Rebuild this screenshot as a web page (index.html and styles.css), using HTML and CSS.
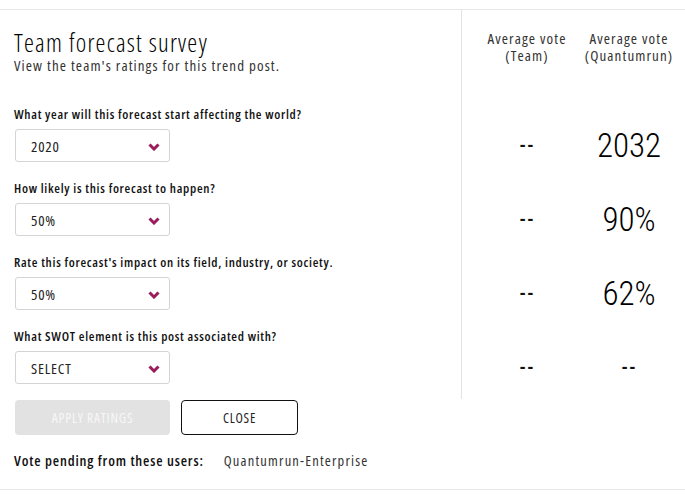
FILE: index.html
```html
<!DOCTYPE html>
<html>
<head>
<meta charset="utf-8">
<link rel="stylesheet" href="styles.css">
</head>
<body>
<div class="survey">
  <div class="top">
    <div class="form">
      <h1 class="title">Team forecast survey</h1>
      <p class="subtitle">View the team's ratings for this trend post.</p>
      <div class="question">
        <div class="label">What year will this forecast start affecting the world?</div>
        <div class="select"><span>2020</span><svg class="chev" viewBox="0 0 12 8"><path d="M1.5 1.5 L6 6 L10.5 1.5" /></svg></div>
      </div>
      <div class="question">
        <div class="label">How likely is this forecast to happen?</div>
        <div class="select"><span>50%</span><svg class="chev" viewBox="0 0 12 8"><path d="M1.5 1.5 L6 6 L10.5 1.5" /></svg></div>
      </div>
      <div class="question">
        <div class="label">Rate this forecast's impact on its field, industry, or society.</div>
        <div class="select"><span>50%</span><svg class="chev" viewBox="0 0 12 8"><path d="M1.5 1.5 L6 6 L10.5 1.5" /></svg></div>
      </div>
      <div class="question">
        <div class="label">What SWOT element is this post associated with?</div>
        <div class="select"><span>SELECT</span><svg class="chev" viewBox="0 0 12 8"><path d="M1.5 1.5 L6 6 L10.5 1.5" /></svg></div>
      </div>
    </div>
    <div class="stats">
      <div class="row head">
        <div class="col">Average vote<br>(Team)</div>
        <div class="col">Average vote<br>(Quantumrun)</div>
      </div>
      <div class="row val"><div class="col dash">--</div><div class="col big">2032</div></div>
      <div class="row val"><div class="col dash">--</div><div class="col big">90%</div></div>
      <div class="row val"><div class="col dash">--</div><div class="col big">62%</div></div>
      <div class="row val"><div class="col dash">--</div><div class="col dash">--</div></div>
    </div>
  </div>
  <div class="actions">
    <button class="btn apply">APPLY RATINGS</button>
    <button class="btn close">CLOSE</button>
  </div>
  <div class="pending">
    <span class="pending-label">Vote pending from these users:</span>
    <span class="pending-user">Quantumrun-Enterprise</span>
  </div>
</div>
</body>
</html>
```
FILE: styles.css
```css
html, body {
  margin: 0;
  padding: 0;
  background: #fff;
}
body {
  padding-top: 9px;
  font-family: "Open Sans", sans-serif;
  font-stretch: 87.5%;
  font-weight: 400;
  color: #222;
}
.survey {
  border-top: 1px solid #e6e6e6;
  border-bottom: 1px solid #e6e6e6;
  width: 685px;
}
.top {
  display: flex;
  height: 389px;
}
.form {
  width: 447px;
  padding-left: 14px;
  border-right: 1px solid #e3e3e3;
}
.title {
  margin: 0;
  padding-top: 18px;
  font-size: 25px;
  line-height: 28px;
  font-weight: 300;
  letter-spacing: 1.2px;
  color: #000;
}
.subtitle {
  margin: 0 0 32px;
  font-size: 15px;
  line-height: 18px;
  font-weight: 400;
  letter-spacing: 1.1px;
  color: #333;
}
.label {
  font-size: 13px;
  font-weight: 600;
  line-height: 16px;
  letter-spacing: 0.7px;
  color: #111;
  margin-bottom: 7px;
}
.select {
  box-sizing: border-box;
  width: 155px;
  height: 33px;
  margin-left: 1px;
  border: 1px solid #d4d4d4;
  border-radius: 3px;
  display: flex;
  align-items: center;
  justify-content: space-between;
  padding: 0 9px 0 15px;
  margin-bottom: 18px;
  font-size: 15px;
  font-weight: 400;
  letter-spacing: 0.8px;
  color: #222;
}
.chev {
  width: 12px;
  height: 8px;
  margin-top: 2px;
}
.chev path {
  fill: none;
  stroke: #9a1c5c;
  stroke-width: 3;
}
.stats {
  padding-left: 15px;
  padding-top: 20px;
  display: flex;
  flex-direction: column;
}
.row {
  display: flex;
  flex-shrink: 0;
  gap: 2px;
}
.col {
  width: 100px;
  text-align: center;
}
.head .col {
  font-size: 15px;
  line-height: 17px;
  font-weight: 400;
  letter-spacing: 1.1px;
  color: #333;
}
.head {
  height: 99px;
}
.val {
  height: 33px;
  align-items: center;
  margin-bottom: 41px;
}
.dash {
  font-family: Roboto, sans-serif;
  font-size: 19px;
  font-weight: 700;
  color: #111;
  letter-spacing: 1px;
}
.big {
  font-family: Roboto, sans-serif;
  font-size: 33px;
  font-weight: 300;
  color: #000;
}
.actions {
  display: flex;
  gap: 11px;
  padding: 1px 0 0 15px;
}
.btn {
  box-sizing: border-box;
  height: 35px;
  border-radius: 4px;
  font-family: inherit;
  font-stretch: 87.5%;
  font-weight: 400;
  font-size: 13.5px;
  letter-spacing: 0.8px;
  cursor: pointer;
}
.apply {
  width: 155px;
  background: #e2e2e2;
  border: none;
  color: #f7f7f7;
}
.close {
  width: 117px;
  background: #fff;
  border: 1px solid #111;
  color: #222;
}
.pending {
  display: flex;
  gap: 20px;
  padding: 17px 0 0 14px;
  height: 37px;
  font-size: 14.5px;
  line-height: 18px;
}
.pending-label {
  font-weight: 600;
  letter-spacing: 0.85px;
  color: #111;
}
.pending-user {
  font-weight: 400;
  letter-spacing: 1.2px;
  color: #333;
}
```
